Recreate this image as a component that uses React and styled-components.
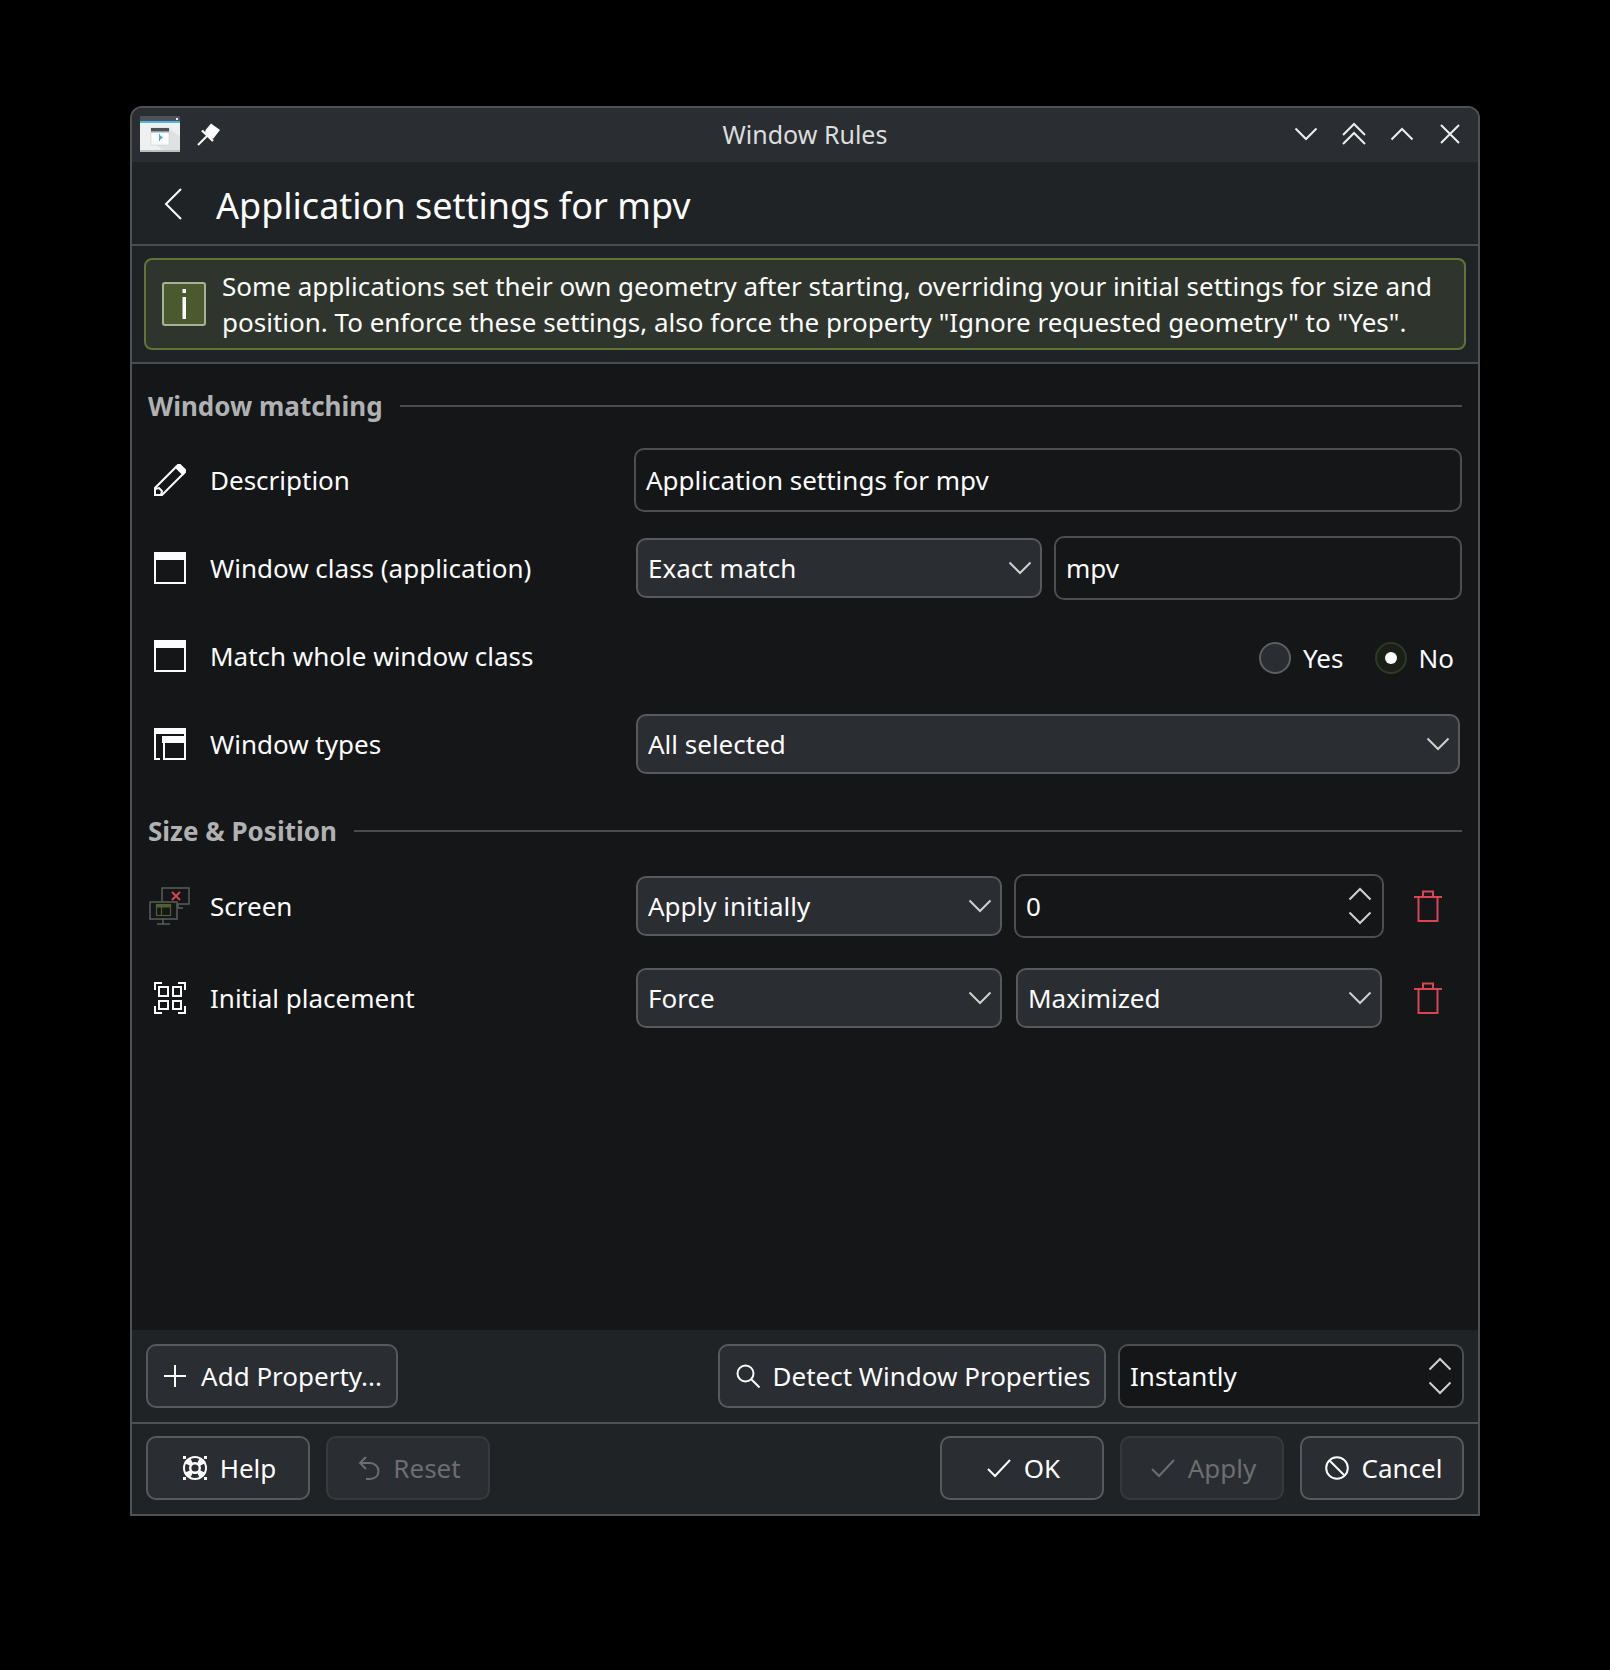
import React from "react";
import styled, { createGlobalStyle } from "styled-components";

const GlobalStyle = createGlobalStyle`
  html, body {
    margin: 0;
    padding: 0;
    background: #000;
  }
  body {
    font-family: "Noto Sans", "Open Sans", sans-serif;
    font-size: 26px;
    color: #fcfcfc;
  }
`;

const Chevron = ({ up, size = 24, color = "#cfcfcf" }) => (
  <svg width={size} height={size} viewBox="0 0 24 24" fill="none" stroke={color} strokeWidth="2">
    <path d={up ? "M1.5 17.5 L12 7 L22.5 17.5" : "M1.5 6.5 L12 17 L22.5 6.5"} />
  </svg>
);

const TrashIcon = () => (
  <svg width="28" height="32" viewBox="0 0 28 32" fill="none" stroke="#da4453" strokeWidth="2">
    <path d="M0 7 H28" />
    <path d="M4.5 7 V31 H23.5 V7" />
    <path d="M9 6 V1.5 H19 V6" />
  </svg>
);

const WindowIcon = () => (
  <svg width="32" height="32" viewBox="0 0 32 32" fill="none">
    <path d="M0 0 H32 V8 H0 Z" fill="#fcfcfc" />
    <path d="M1 8 V31 H31 V8" stroke="#fcfcfc" strokeWidth="2" />
  </svg>
);

const WindowTypesIcon = () => (
  <svg width="32" height="32" viewBox="0 0 32 32" fill="none" stroke="#fcfcfc" strokeWidth="2">
    <path d="M0 0 H32 V5 H0 Z" fill="#fcfcfc" />
    <path d="M1 5 V31 H6" />
    <path d="M31 5 V8" />
    <path d="M9 9 H32 V14 H9 Z" fill="#fcfcfc" />
    <path d="M10 14 V31 H31 V14" />
  </svg>
);

const PencilIcon = () => (
  <svg width="32" height="32" viewBox="0 0 32 32" fill="none" stroke="#fcfcfc" strokeWidth="2">
    <path d="M1 31 V24 L22 3 L29 10 L8 31 Z" />
    <path d="M25 0 L32 7 L29 10 L22 3 Z" fill="#fcfcfc" />
    <path d="M1 25 L5 24 L8 27 L7 31" />
  </svg>
);

const PlacementIcon = () => (
  <svg width="32" height="32" viewBox="0 0 32 32" fill="none" stroke="#fcfcfc" strokeWidth="2">
    <path d="M1 8 V1 H8 M24 1 H31 V8 M1 24 V31 H8 M24 31 H31 V24" />
    <rect x="5" y="5" width="9" height="9" />
    <rect x="19" y="5" width="8" height="9" />
    <rect x="5" y="19" width="9" height="8" />
    <rect x="19" y="19" width="8" height="8" />
  </svg>
);

const ScreenIcon = () => (
  <svg width="42" height="38" viewBox="0 0 42 38" fill="none">
    <path d="M13 14 V1 H40 V17 H27" stroke="#5a5c5e" strokeWidth="1.5" />
    <path d="M29 21 H34 M29 17 V21" stroke="#5a5c5e" strokeWidth="1.5" />
    <path d="M23 5 L31 13 M31 5 L23 13" stroke="#da4453" strokeWidth="2" />
    <rect x="1" y="15" width="27" height="17" fill="#141618" stroke="#5a5c5e" strokeWidth="1.5" />
    <path d="M14 32 V37 M8 37 H21" stroke="#5a5c5e" strokeWidth="1.5" />
    <rect x="7.5" y="17.5" width="14" height="11" stroke="#4f6130" strokeWidth="1.2" />
    <path d="M7 17 H22 V20.5 H7 Z" fill="#4f6130" />
    <path d="M12.5 20 V28" stroke="#4f6130" strokeWidth="1.2" />
  </svg>
);

const AppIcon = () => (
  <svg width="40" height="36" viewBox="0 0 40 36">
    <rect x="0" y="0" width="40" height="36" fill="#eff0f1" />
    <rect x="0" y="0" width="40" height="5" fill="#4d5256" />
    <rect x="0" y="5" width="40" height="2" fill="#55b1e0" />
    <rect x="36" y="2" width="2" height="2" fill="#eff0f1" />
    <path d="M12 24 L28 12 L40 20 V34 H22 Z" fill="#dfe1e3" />
    <rect x="11" y="12" width="18" height="17" fill="#fcfcfc" stroke="#c8cbcd" strokeWidth="0.6" />
    <rect x="11" y="12" width="18" height="3" fill="#4d5256" />
    <rect x="11" y="15" width="18" height="1.5" fill="#90a0aa" />
    <path d="M19 18.5 L23 21.5 L19 24.5 Z" fill="#3daee9" />
    <rect x="19" y="18" width="1" height="7" fill="#3daee9" />
    <rect x="0" y="34" width="40" height="2" fill="#bcc0c3" />
  </svg>
);

const PinIcon = () => (
  <svg width="24" height="24" viewBox="0 0 24 24" fill="none">
    <path d="M14 1.5 L23 8 L16 17 L12 15.5 L8 11 L8.5 8 Z" fill="#fcfcfc" />
    <path d="M5 8.5 L16 19" stroke="#fcfcfc" strokeWidth="2.4" />
    <path d="M1 23 L10 14" stroke="#fcfcfc" strokeWidth="2" />
  </svg>
);

const BackIcon = () => (
  <svg width="18" height="32" viewBox="0 0 18 32" fill="none" stroke="#fcfcfc" strokeWidth="2">
    <path d="M17 1 L2 16 L17 31" />
  </svg>
);

const InfoIcon = () => (
  <svg width="44" height="44" viewBox="0 0 44 44">
    <rect x="1" y="1" width="42" height="42" rx="2" fill="#4a5a2e" stroke="#a8b298" strokeWidth="2" />
    <rect x="20.5" y="7" width="3.5" height="4" fill="#fcfcfc" />
    <rect x="20.5" y="15" width="3.5" height="22" fill="#fcfcfc" />
  </svg>
);

const PlusIcon = () => (
  <svg width="22" height="22" viewBox="0 0 22 22" stroke="#fcfcfc" strokeWidth="2">
    <path d="M11 0 V22 M0 11 H22" />
  </svg>
);

const SearchIcon = () => (
  <svg width="24" height="24" viewBox="0 0 24 24" fill="none" stroke="#fcfcfc" strokeWidth="2">
    <circle cx="9.5" cy="9.5" r="8" />
    <path d="M15 15 L23.5 23.5" />
  </svg>
);

const HelpIcon = () => (
  <svg width="24" height="24" viewBox="0 0 24 24" fill="none">
    <circle cx="12" cy="12" r="12" fill="#fcfcfc" />
    <path d="M0 0 H3 V3 H0 Z M21 0 H24 V3 H21 Z M0 21 H3 V24 H0 Z M21 21 H24 V24 H21 Z" fill="#fcfcfc" />
    <path
      d="M8.62 4.75 A8 8 0 0 1 15.38 4.75 M19.25 8.62 A8 8 0 0 1 19.25 15.38 M15.38 19.25 A8 8 0 0 1 8.62 19.25 M4.75 15.38 A8 8 0 0 1 4.75 8.62"
      stroke="#2a2d31"
      strokeWidth="4"
    />
    <circle cx="12" cy="12" r="3.6" fill="#2a2d31" />
  </svg>
);

const ResetIcon = () => (
  <svg width="22" height="24" viewBox="0 0 22 24" fill="none" stroke="#6c6e70" strokeWidth="2">
    <path d="M8 1 L2 7 L8 13" />
    <path d="M2 7 H12 C17 7 20.5 11 20.5 15 C20.5 20 17 23 12 23 H8" />
  </svg>
);

const CheckIcon = ({ color = "#fcfcfc" }) => (
  <svg width="24" height="20" viewBox="0 0 24 20" fill="none" stroke={color} strokeWidth="2">
    <path d="M1 11 L8 18 L23 2" />
  </svg>
);

const CancelIcon = () => (
  <svg width="24" height="24" viewBox="0 0 24 24" fill="none" stroke="#fcfcfc" strokeWidth="2">
    <circle cx="12" cy="12" r="10.8" />
    <path d="M4.5 4.5 L19.5 19.5" />
  </svg>
);

const Scene = styled.div`
  min-height: 1670px;
  box-sizing: border-box;
  padding: 106px 130px 0;
  background: #000;
`;

const Window = styled.div`
  width: 1350px;
  height: 1410px;
  box-sizing: border-box;
  display: flex;
  flex-direction: column;
  border: 2px solid #4f5154;
  border-top-left-radius: 12px;
  border-top-right-radius: 12px;
  background: #141618;
  overflow: hidden;
`;

const TitleBar = styled.div`
  height: 54px;
  flex: none;
  display: flex;
  align-items: center;
  background: #2a2e32;
  padding: 0 0 0 8px;
  position: relative;
`;

const TitleIcons = styled.div`
  display: flex;
  align-items: center;
  gap: 17px;
  padding-bottom: 2px;
`;

const TitleText = styled.div`
  position: absolute;
  left: 0;
  right: 0;
  bottom: 11px;
  text-align: center;
  font-size: 25px;
  color: #dcdddd;
`;

const TitleButtons = styled.div`
  margin-left: auto;
  display: flex;
  align-items: center;
  gap: 24px;
  padding: 0 16px 2px 0;
`;

const PageHeader = styled.div`
  height: 84px;
  flex: none;
  box-sizing: border-box;
  display: flex;
  align-items: center;
  background: #202326;
  border-bottom: 2px solid #4a4c4f;
  padding-left: 32px;
  & > svg {
    margin-top: 2px;
  }
`;

const PageTitle = styled.h1`
  margin: 4px 0 0 34px;
  font-size: 36px;
  font-weight: 400;
  color: #fcfcfc;
`;

const Notice = styled.div`
  height: 118px;
  flex: none;
  box-sizing: border-box;
  display: flex;
  align-items: flex-start;
  background: #202326;
  border-bottom: 2px solid #4a4c4f;
  padding: 12px 12px 0;
`;

const Banner = styled.div`
  flex: 1;
  height: 92px;
  box-sizing: border-box;
  display: flex;
  align-items: center;
  gap: 16px;
  padding: 0 16px;
  background: #2f352c;
  border: 2px solid #5f7436;
  border-radius: 8px;
  line-height: 36px;
  white-space: nowrap;
`;

const Content = styled.div`
  flex: 1;
  min-height: 0;
  padding: 20px 16px 0 16px;
  background: #141618;
`;

const Section = styled.div`
  display: flex;
  align-items: center;
  height: 44px;
  gap: 17px;
  margin-top: ${(p) => p.$top || 0}px;
  margin-bottom: ${(p) => p.$bottom}px;
`;

const SectionName = styled.span`
  font-weight: 700;
  color: #b0b1b2;
`;

const SectionLine = styled.div`
  flex: 1;
  height: 2px;
  background: #4a4c4f;
`;

const Row = styled.div`
  height: ${(p) => p.$height}px;
  display: grid;
  grid-template-columns: 486px 1fr;
  align-items: center;
`;

const Label = styled.div`
  display: flex;
  align-items: center;
  gap: 16px;
  margin-left: -2px;
`;

const IconCell = styled.div`
  width: 48px;
  height: 40px;
  display: flex;
  align-items: center;
  justify-content: center;
`;

const Editor = styled.div`
  display: flex;
  align-items: center;
  gap: 10px;
`;

const Field = styled.div`
  flex: 1;
  min-width: 0;
  height: 64px;
  box-sizing: border-box;
  display: flex;
  align-items: center;
  justify-content: space-between;
  padding: 0 12px 0 10px;
  border: 2px solid #4c4e50;
  border-radius: 10px;
  background: #141618;
`;

const Combo = styled.div`
  flex: ${(p) => (p.$width ? "none" : 1)};
  width: ${(p) => (p.$width ? `${p.$width}px` : "auto")};
  min-width: 0;
  height: 60px;
  margin: 0 2px;
  box-sizing: border-box;
  display: flex;
  align-items: center;
  justify-content: space-between;
  padding: 0 8px 0 10px;
  border: 2px solid #58595b;
  border-radius: 10px;
  background: #2a2d31;
`;

const Spinner = styled.div`
  display: flex;
  flex-direction: column;
  margin-right: -2px;
`;

const RadioRow = styled.div`
  display: flex;
  justify-content: flex-end;
  align-items: center;
  margin-top: 3px;
  padding-right: 8px;
  gap: 31px;
`;

const RadioItem = styled.div`
  display: flex;
  align-items: center;
  gap: 12px;
`;

const RadioCircle = styled.div`
  width: 32px;
  height: 32px;
  box-sizing: border-box;
  border-radius: 50%;
  display: flex;
  align-items: center;
  justify-content: center;
  border: 2px solid ${(p) => (p.$on ? "#2f3a24" : "#5c5e60")};
  background: ${(p) => (p.$on ? "#1a1f18" : "#2a2d31")};
  &::after {
    content: "";
    display: ${(p) => (p.$on ? "block" : "none")};
    width: 12px;
    height: 12px;
    border-radius: 50%;
    background: #fcfcfc;
  }
`;

const TrashSlot = styled.div`
  width: 78px;
  flex: none;
  box-sizing: border-box;
  display: flex;
  justify-content: center;
  margin-left: -10px;
  padding-left: 9px;
`;

const Toolbar = styled.div`
  height: 94px;
  flex: none;
  box-sizing: border-box;
  display: flex;
  align-items: flex-start;
  gap: 12px;
  padding: 14px 14px 0;
  background: #202326;
  border-bottom: 2px solid #4f5154;
`;

const Footer = styled.div`
  height: 90px;
  flex: none;
  box-sizing: border-box;
  display: flex;
  align-items: flex-start;
  gap: 16px;
  padding: 12px 14px 0;
  background: #202326;
`;

const Button = styled.div`
  width: ${(p) => p.$width}px;
  height: 64px;
  flex: none;
  box-sizing: border-box;
  display: flex;
  align-items: center;
  justify-content: center;
  gap: ${(p) => p.$gap || 13}px;
  padding-left: 2px;
  border: 2px solid ${(p) => (p.$disabled ? "#38393c" : "#58595b")};
  border-radius: 10px;
  background: #2a2d31;
  color: ${(p) => (p.$disabled ? "#6c6e70" : "#fcfcfc")};
`;

const FooterButton = styled(Button)`
  padding-left: 3px;
`;

const Spacer = styled.div`
  flex: 1;
`;

const SpinField = styled(Field)`
  flex: none;
  width: 346px;
`;

export default function App() {
  return (
    <>
      <GlobalStyle />
      <Scene>
        <Window>
          <TitleBar>
            <TitleIcons>
              <AppIcon />
              <PinIcon />
            </TitleIcons>
            <TitleText>Window Rules</TitleText>
            <TitleButtons>
              <Chevron color="#eee" />
              <svg width="24" height="24" viewBox="0 0 24 24" fill="none" stroke="#eee" strokeWidth="2">
                <path d="M1 13 L12 2 L23 13 M1 22 L12 11 L23 22" />
              </svg>
              <Chevron up color="#eee" />
              <svg width="24" height="24" viewBox="0 0 24 24" fill="none" stroke="#eee" strokeWidth="2">
                <path d="M3 3 L21 21 M21 3 L3 21" />
              </svg>
            </TitleButtons>
          </TitleBar>

          <PageHeader>
            <BackIcon />
            <PageTitle>Application settings for mpv</PageTitle>
          </PageHeader>

          <Notice>
            <Banner>
              <InfoIcon />
              <div>
                Some applications set their own geometry after starting, overriding your initial settings for size and
                <br />
                position. To enforce these settings, also force the property "Ignore requested geometry" to "Yes".
              </div>
            </Banner>
          </Notice>

          <Content>
            <Section $bottom={8}>
              <SectionName>Window matching</SectionName>
              <SectionLine />
            </Section>

            <Row $height={88}>
              <Label>
                <IconCell><PencilIcon /></IconCell>
                Description
              </Label>
              <Editor>
                <Field>Application settings for mpv</Field>
              </Editor>
            </Row>

            <Row $height={88}>
              <Label>
                <IconCell><WindowIcon /></IconCell>
                Window class (application)
              </Label>
              <Editor>
                <Combo $width={406}>
                  Exact match
                  <Chevron />
                </Combo>
                <Field>mpv</Field>
              </Editor>
            </Row>

            <Row $height={88}>
              <Label>
                <IconCell><WindowIcon /></IconCell>
                Match whole window class
              </Label>
              <RadioRow>
                <RadioItem>
                  <RadioCircle />
                  Yes
                </RadioItem>
                <RadioItem>
                  <RadioCircle $on />
                  No
                </RadioItem>
              </RadioRow>
            </Row>

            <Row $height={88}>
              <Label>
                <IconCell><WindowTypesIcon /></IconCell>
                Window types
              </Label>
              <Editor>
                <Combo>
                  All selected
                  <Chevron />
                </Combo>
              </Editor>
            </Row>

            <Section $top={21} $bottom={7}>
              <SectionName>{"Size & Position"}</SectionName>
              <SectionLine />
            </Section>

            <Row $height={92}>
              <Label>
                <IconCell><ScreenIcon /></IconCell>
                Screen
              </Label>
              <Editor>
                <Combo>
                  Apply initially
                  <Chevron />
                </Combo>
                <Field>
                  0
                  <Spinner>
                    <Chevron up />
                    <Chevron />
                  </Spinner>
                </Field>
                <TrashSlot><TrashIcon /></TrashSlot>
              </Editor>
            </Row>

            <Row $height={92}>
              <Label>
                <IconCell><PlacementIcon /></IconCell>
                Initial placement
              </Label>
              <Editor>
                <Combo>
                  Force
                  <Chevron />
                </Combo>
                <Combo>
                  Maximized
                  <Chevron />
                </Combo>
                <TrashSlot><TrashIcon /></TrashSlot>
              </Editor>
            </Row>
          </Content>

          <Toolbar>
            <Button $width={252} $gap={15}>
              <PlusIcon />
              Add Property...
            </Button>
            <Spacer />
            <Button $width={388}>
              <SearchIcon />
              Detect Window Properties
            </Button>
            <SpinField>
              Instantly
              <Spinner>
                <Chevron up />
                <Chevron />
              </Spinner>
            </SpinField>
          </Toolbar>

          <Footer>
            <FooterButton $width={164}>
              <HelpIcon />
              Help
            </FooterButton>
            <FooterButton $width={164} $disabled>
              <ResetIcon />
              Reset
            </FooterButton>
            <Spacer />
            <FooterButton $width={164}>
              <CheckIcon />
              OK
            </FooterButton>
            <FooterButton $width={164} $disabled>
              <CheckIcon color="#6c6e70" />
              Apply
            </FooterButton>
            <FooterButton $width={164}>
              <CancelIcon />
              Cancel
            </FooterButton>
          </Footer>
        </Window>
      </Scene>
    </>
  );
}
